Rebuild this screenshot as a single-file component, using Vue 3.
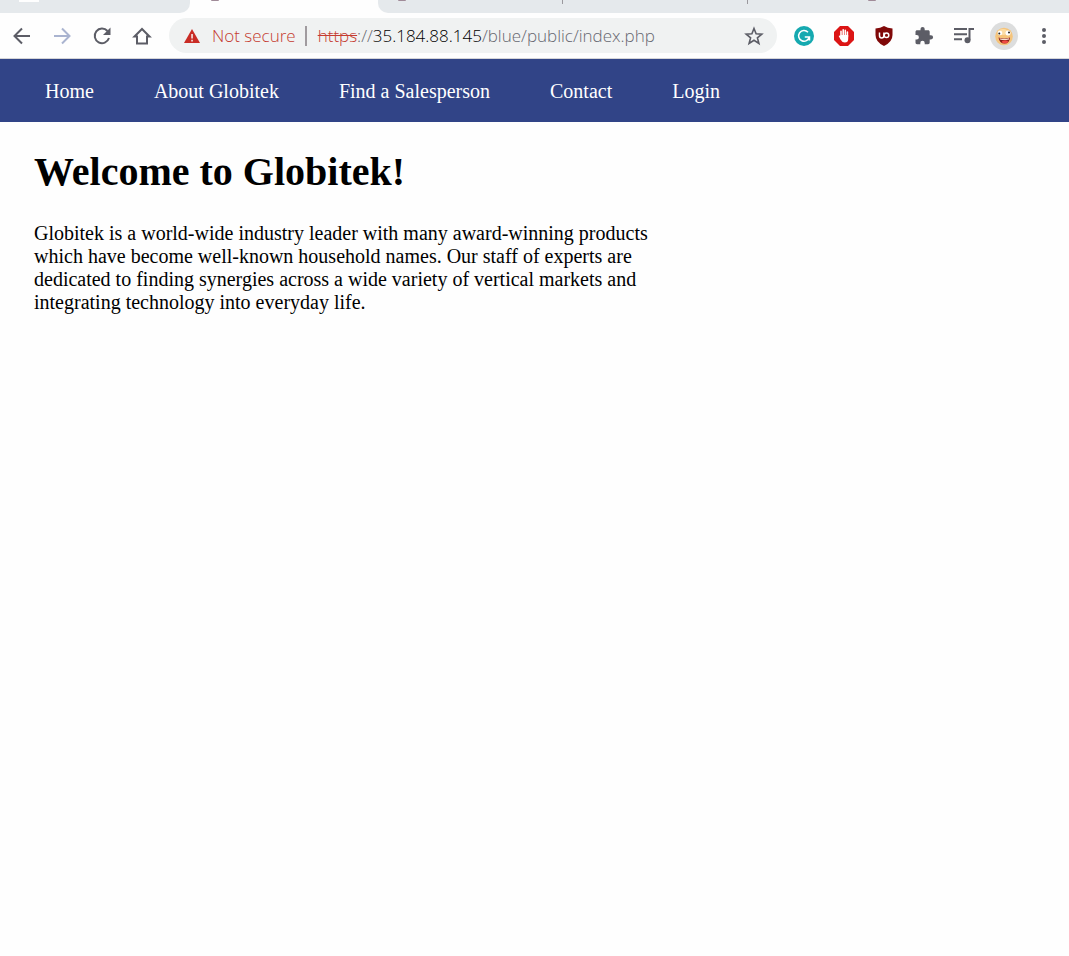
<script setup>
import { ref } from 'vue'

const address = ref('')
const tabs = [
  { name: 'Tab 1', kind: 'first', icon: 'page' },
  { name: 'Globitek', kind: 'active', icon: 'dot' },
  { name: 'Tab 3', kind: 'next', icon: 'dot' },
  { name: 'Tab 4', kind: 'plain', icon: '' },
  { name: 'Tab 5', kind: 'rest', icon: 'far' },
]
const links = ['Home', 'About Globitek', 'Find a Salesperson', 'Contact', 'Login']
</script>

<template>
  <div class="window">
    <div class="tabs" role="tablist">
      <button
        v-for="tab in tabs"
        :key="tab.name"
        class="tab"
        :class="tab.kind"
        role="tab"
        :aria-selected="tab.kind === 'active'"
        :aria-label="tab.name"
      >
        <i v-if="tab.icon" class="favicon" :class="tab.icon"></i>
      </button>
    </div>

    <div class="toolbar">
      <div class="controls">
        <button class="tool" aria-label="Back">
          <svg width="20" height="20" viewBox="0 0 20 20"><path d="M18 10H3M10 2.5 2.5 10l7.500 7.500" fill="none" stroke="#5c5d66" stroke-width="2" /></svg>
        </button>
        <button class="tool" aria-label="Forward">
          <svg width="20" height="20" viewBox="0 0 20 20"><path d="M2 10h15M10 2.500 17.500 10 10 17.500" fill="none" stroke="#aab4d0" stroke-width="2" /></svg>
        </button>
        <button class="tool" aria-label="Reload">
          <svg width="20" height="20" viewBox="0 0 20 20"><path d="M15.500 5A7.300 7.300 0 1 0 17 12" fill="none" stroke="#5c5d66" stroke-width="2" /><path d="M18.500 1.500v7.500h-7.500z" fill="#5c5d66" /></svg>
        </button>
        <button class="tool" aria-label="Home page">
          <svg width="20" height="20" viewBox="0 0 20 20"><path d="M2.500 10.500 10 3l7.500 7.500H15v7H5v-7z" fill="none" stroke="#5c5d66" stroke-width="2" /></svg>
        </button>
      </div>

      <div class="omnibox">
        <button class="security">
          <svg width="16" height="16" viewBox="0 0 16 16"><path d="M8 1 16 15H0z" fill="#c92c25" /><path d="M7.200 6h1.700v4.500H7.200zM7.200 11.800h1.700v1.700H7.200z" fill="#f3dcda" /></svg>
          <span>Not secure</span>
        </button>
        <span class="separator"></span>
        <div class="address">
          <label for="address"><span class="scheme">https</span>://<span class="host">35.184.88.145</span>/blue/public/index.php</label>
          <input id="address" v-model="address" type="text" />
        </div>
        <button class="star" aria-label="Bookmark this page">
          <svg width="20" height="20" viewBox="0 0 20 20"><path d="m10 2.500 2.100 5.300 5.700.4-4.400 3.600 1.500 5.600-4.900-3.100-4.900 3.100 1.500-5.600-4.400-3.600 5.700-.4z" fill="none" stroke="#5c5d66" stroke-width="1.600" /></svg>
        </button>
      </div>

      <div class="controls">
        <button class="tool" aria-label="Writing assistant">
          <svg width="20" height="20" viewBox="0 0 20 20"><circle cx="10" cy="10" r="10" fill="#15a9b0" /><path d="M14 6.200A5.400 5.400 0 1 0 15.300 11H10.800M15.500 10.500v4" fill="none" stroke="#fff" stroke-width="1.500" /></svg>
        </button>
        <button class="tool" aria-label="Ad blocker">
          <svg width="20" height="20" viewBox="0 0 20 20"><path d="M6 0h8l6 6v8l-6 6H6l-6-6V6z" fill="#dc1515" /><path d="M7 11V5.300M9.200 10V3.800M11.300 10V4.300M13.400 11V6" stroke="#fff" stroke-width="1.600" stroke-linecap="round" /><path d="M6.200 9h8v4q0 3.500-3.400 3.500-2.700 0-4.300-3L4.700 10q.9-1 2 .6z" fill="#fff" /></svg>
        </button>
        <button class="tool" aria-label="Content blocker">
          <svg width="20" height="20" viewBox="0 0 20 20"><path d="M10 0q3.500 2.400 8.500 2.500V9q0 7-8.500 11Q1.500 16 1.500 9V2.500Q6.500 2.400 10 0z" fill="#800909" /><path d="M5.500 6.500v3.200a2.200 2.200 0 0 0 4.400 0V6.500" fill="none" stroke="#fff" stroke-width="1.500" /><circle cx="12.500" cy="9.200" r="2.300" fill="none" stroke="#fff" stroke-width="1.500" /></svg>
        </button>
        <button class="tool" aria-label="Extensions">
          <svg width="20" height="20" viewBox="0 0 20 20"><path d="M17 9.200h-1.300V5.800c0-.9-.7-1.600-1.600-1.600h-3.400V3a2.100 2.100 0 0 0-4.200 0v1.200H3.100c-.9 0-1.600.7-1.600 1.600v3.200h1.200a2.200 2.200 0 0 1 0 4.400H1.500v3.200c0 .9.700 1.600 1.600 1.600h3.200V17a2.200 2.200 0 0 1 4.400 0v1.200h3.400c.9 0 1.600-.7 1.600-1.600v-3.200H17a2.100 2.100 0 0 0 0-4.200z" fill="#5c5d66" /></svg>
        </button>
        <button class="tool" aria-label="Media controls">
          <svg width="20" height="20" viewBox="0 0 20 20"><path d="M0 3h13M0 8.300h13M0 13.300h8M15.500 14V3H20" fill="none" stroke="#5c5d66" stroke-width="2" /><circle cx="13.500" cy="14.200" r="3" fill="#5c5d66" /></svg>
        </button>
        <button class="tool" aria-label="Profile">
          <svg width="28" height="28" viewBox="0 0 28 28"><circle cx="14" cy="14" r="14" fill="#dcdddd" /><circle cx="14" cy="14.500" r="8.800" fill="#f5c47b" /><ellipse cx="13" cy="10" rx="5.500" ry="3" fill="#fbdca5" /><circle cx="10" cy="11" r="2.300" fill="#fff" /><circle cx="18" cy="11" r="2.500" fill="#fff" /><circle cx="9.300" cy="11.500" r="1" fill="#222" /><circle cx="19" cy="10.500" r="1" fill="#222" /><path d="M8.500 15.500q5.500 2 11.500 0-.5 6-5.500 6t-6-6z" fill="#8d1c18" /><path d="M9.500 16.200q4.500 1.200 9.500 0v1.300q-5 1-9 0z" fill="#f5ded2" /><ellipse cx="15" cy="19.800" rx="3" ry="1.500" fill="#ee4a42" /></svg>
        </button>
        <button class="tool" aria-label="Menu">
          <svg width="20" height="20" viewBox="0 0 20 20" fill="#5c5d66"><circle cx="10" cy="4" r="2" /><circle cx="10" cy="10" r="2" /><circle cx="10" cy="16" r="2" /></svg>
        </button>
      </div>
    </div>

    <nav class="site-nav">
      <a v-for="link in links" :key="link" href="#">{{ link }}</a>
    </nav>

    <main>
      <h1>Welcome to Globitek!</h1>
      <p>
        Globitek is a world-wide industry leader with many award-winning products which have
        become well-known household names. Our staff of experts are dedicated to finding synergies
        across a wide variety of vertical markets and integrating technology into everyday life.
      </p>
    </main>
  </div>
</template>

<style>
body {
  margin: 0;
  background: #fefefe;
}
</style>

<style scoped>
.window {
  font-family: "Liberation Serif", "Times New Roman", serif;
  font-size: 20px;
  line-height: 23px;
  color: #000;
}
button {
  padding: 0;
  border: 0;
  background: none;
  font: inherit;
  color: inherit;
}
svg {
  display: block;
}
.tabs {
  display: flex;
  height: 13px;
}
.tab {
  display: flex;
  flex: 0 0 185px;
  align-items: flex-start;
  background: #e5e9ec;
}
.tab.first {
  flex-basis: 190px;
  padding-left: 19px;
  border-bottom-right-radius: 10px;
}
.tab.active {
  flex-basis: 188px;
  padding-left: 21px;
  background: #fefefe;
}
.tab.next {
  padding-left: 20px;
  border-bottom-left-radius: 10px;
}
.tab.rest {
  flex: 1;
  padding-left: 120px;
}
.tab.next,
.tab.plain {
  background-image: linear-gradient(#9a989d, #9a989d);
  background-repeat: no-repeat;
  background-position: right top;
  background-size: 1px 4px;
}
.favicon {
  width: 8px;
  height: 1px;
  border-radius: 0 0 4px 4px;
  background: #a08b98;
}
.favicon.page {
  width: 20px;
  height: 2px;
  border-radius: 0;
  background: #fefefe;
}
.toolbar {
  display: flex;
  align-items: center;
  gap: 17px;
  height: 45px;
  padding: 0 15px 0 12px;
  border-bottom: 1px solid #d5d5d8;
  background: #fefefe;
  font-family: "Open Sans", "Noto Sans", sans-serif;
  font-size: 17px;
  font-weight: 350;
}
.controls {
  display: flex;
  gap: 20px;
}
.tool {
  display: flex;
  align-items: center;
  justify-content: center;
  width: 20px;
  height: 28px;
}
.tool svg {
  flex: none;
}
.omnibox {
  display: flex;
  flex: 1;
  align-items: center;
  height: 35px;
  padding: 0 13px 0 15px;
  border-radius: 18px;
  background: #f0f2f2;
}
.security {
  display: flex;
  align-items: center;
  gap: 12px;
  color: #c53b30;
}
.separator {
  width: 2px;
  height: 20px;
  margin: 0 11px 0 9px;
  background: #a09b9f;
}
.address {
  position: relative;
  flex: 1;
  color: #666770;
  white-space: nowrap;
}
.address input {
  position: absolute;
  inset: 0;
  width: 100%;
  padding: 0;
  border: 0;
  background: transparent;
  font: inherit;
  outline: 0;
}
.scheme {
  color: #c53b30;
  text-decoration: line-through;
}
.host {
  color: #000;
}
.site-nav {
  display: flex;
  flex-wrap: wrap;
  gap: 20px 60px;
  padding: 21px 45px 19px;
  background: #314487;
}
.site-nav a {
  color: #fff;
  text-decoration: none;
}
main {
  max-width: 625px;
  padding: 27px 34px;
}
h1 {
  margin: 0 0 27px;
  font-size: 40px;
  line-height: 46px;
}
p {
  margin: 0;
}
</style>
